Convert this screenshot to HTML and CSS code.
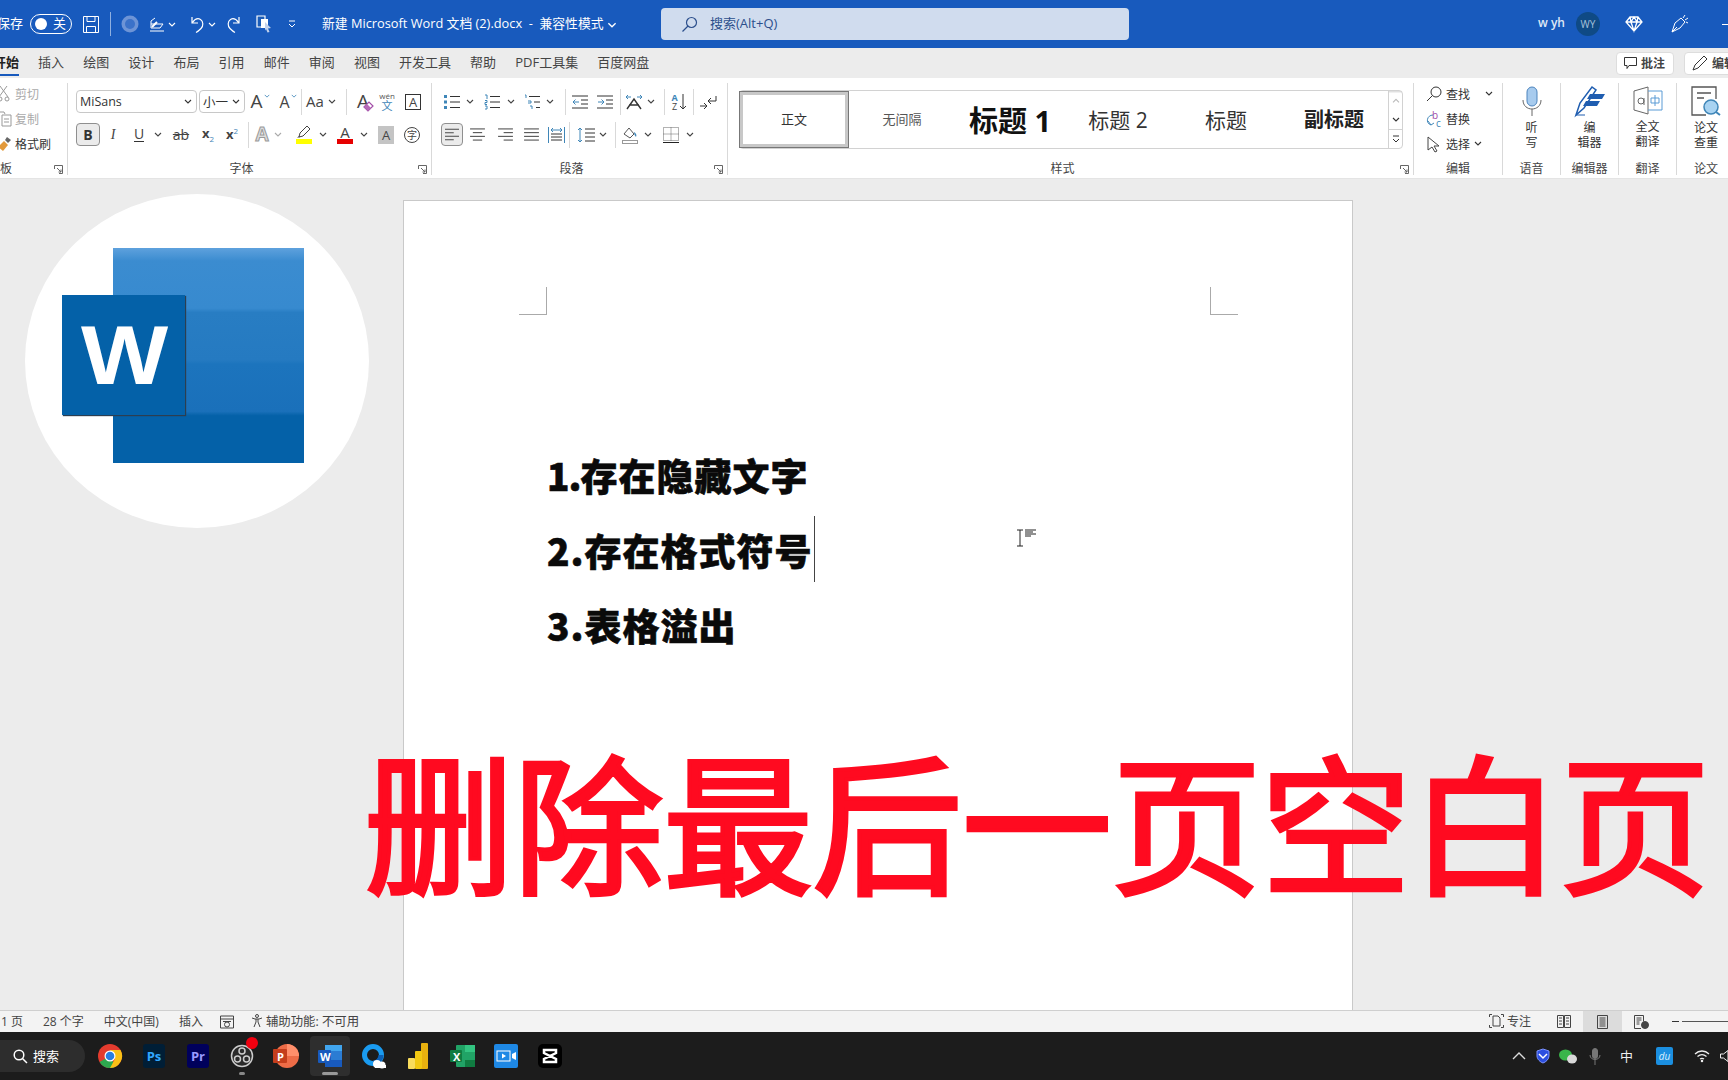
FILE: index.html
```html
<!DOCTYPE html>
<html lang="zh-CN">
<head>
    <meta charset="UTF-8">
    <title>新建 Microsoft Word 文档 (2).docx - Word</title>
    <link rel="stylesheet" href="styles.css">
</head>
<body>
    <svg class="sprite" width="0" height="0">
        <symbol id="chev" viewBox="0 0 8 5"><path d="M1 1l3 3 3-3" fill="none" stroke="currentColor" stroke-width="1.1"/></symbol>
        <symbol id="launcher" viewBox="0 0 9 9"><path d="M.5 4V.5h8v8H5M3 3l4 4M7 4.500V7H4.500" fill="none" stroke="#666"/></symbol>
        <symbol id="lines" viewBox="0 0 16 14"><path d="M0 1h16M0 5h16M0 9h16M0 13h16" stroke="currentColor" fill="none"/></symbol>
        <symbol id="left" viewBox="0 0 16 14"><path d="M0 1h16M0 5h10M0 9h16M0 13h10" stroke="#333" fill="none"/></symbol>
        <symbol id="center" viewBox="0 0 16 14"><path d="M0 1h16M3 5h10M0 9h16M3 13h10" stroke="#333" fill="none"/></symbol>
        <symbol id="right" viewBox="0 0 16 14"><path d="M0 1h16M6 5h10M0 9h16M6 13h10" stroke="#333" fill="none"/></symbol>
    </svg>

    <header class="titlebar">
        <span class="save-label">保存</span>
        <span class="w7"></span>
        <span class="toggle"><i class="knob"></i><span class="toggle-text">关</span></span>
        <span class="tool w38">
            <svg width="16" height="17" viewBox="0 0 16 17" fill="none" stroke="#fff"><path d="M.5.500h15v16H.5zM4 .5v5h8v-5M3.500 16.500v-6h9v6"/></svg>
        </span>
        <i class="bar"></i>
        <span class="tool w38">
            <svg width="18" height="18" viewBox="0 0 18 18"><circle cx="9" cy="9" r="8.500" fill="#6d94d6"/><circle cx="9" cy="9" r="5" fill="#3b72c9"/></svg>
        </span>
        <span class="tool w16">
            <svg width="16" height="15" viewBox="0 0 16 15" fill="none" stroke="#fff"><path d="M1 14h14M2 11V4l4-3M2 7h12l-3 4H2"/><path d="M3 10l5-5" stroke-width="2"/></svg>
        </span>
        <span class="tool w14 on-blue"><svg width="8" height="5"><use href="#chev"/></svg></span>
        <span class="w4"></span>
        <span class="tool w26">
            <svg width="16" height="17" viewBox="0 0 16 17" fill="none" stroke="#fff" stroke-width="1.200"><path d="M4 1v6h6M4.500 6.500C7 3 10 2 12.500 3.500c3 2 3 6.500 .5 9-1.500 1.500-3 3-5 4"/></svg>
        </span>
        <span class="tool w6 on-blue"><svg width="8" height="5"><use href="#chev"/></svg></span>
        <span class="tool w40">
            <svg width="16" height="17" viewBox="0 0 16 17" fill="none" stroke="#fff" stroke-width="1.200"><path d="M12 1v6H6M11.500 6.500C9 3 6 2 3.500 3.500c-3 2-3 6.500-.5 9 1.500 1.500 3 3 5 4"/></svg>
        </span>
        <span class="tool w18">
            <svg width="17" height="18" viewBox="0 0 17 18"><path d="M1 1h8v11H1z" fill="#1a5cb8" stroke="#fff" stroke-width="1.200"/><path d="M5 4h7v9H5z" fill="#fff"/><path d="M9 7l6 6-3 .5 1.500 3.500-2 .5-1.500-3.500-1 1.500z" fill="#c4d3ec"/></svg>
        </span>
        <span class="tool w38">
            <svg width="8" height="9" viewBox="0 0 8 9" fill="none" stroke="#fff"><path d="M1 1h6M1 4l3 3 3-3"/></svg>
        </span>
        <span class="w11"></span>
        <span class="doc-title">新建 Microsoft Word 文档 (2).docx &nbsp;-&nbsp; 兼容性模式 <svg width="10" height="6"><use href="#chev"/></svg></span>
        <div class="search">
            <svg width="17" height="17" viewBox="0 0 17 17" fill="none" stroke="#2c4f8c" stroke-width="1.200"><circle cx="10.500" cy="6.500" r="5"/><path d="M7 10l-5.500 5.500"/></svg>
            <span class="search-text">搜索(Alt+Q)</span>
        </div>
        <div class="account">
            <span class="user-name">w yh</span>
            <span class="avatar">WY</span>
            <span class="tool w68">
                <svg width="18" height="16" viewBox="0 0 18 16" fill="none" stroke="#fff" stroke-width="1.300"><path d="M5 1h8l4 5-8 9-8-9zM1 6h16M6 6l3 9 3-9M5 1l1 5 3-5 3 5 1-5"/></svg>
            </span>
            <span class="tool w24">
                <svg width="18" height="20" viewBox="0 0 18 20" fill="none" stroke="#fff"><path d="M1 18l3-9 6-5 4 4-5 6zM1 18l5-5M12 4l2-3M14 6l3-2M15 8l2 1"/></svg>
            </span>
            <i class="minimize"></i>
        </div>
    </header>

    <nav class="tabs">
        <span class="tab active">开始</span>
        <span class="tab">插入</span>
        <span class="tab">绘图</span>
        <span class="tab">设计</span>
        <span class="tab">布局</span>
        <span class="tab">引用</span>
        <span class="tab">邮件</span>
        <span class="tab">审阅</span>
        <span class="tab">视图</span>
        <span class="tab">开发工具</span>
        <span class="tab">帮助</span>
        <span class="tab">PDF工具集</span>
        <span class="tab">百度网盘</span>
        <div class="tab-actions">
            <span class="pill pill-comment">
                <svg width="13" height="12" viewBox="0 0 13 12" fill="none" stroke="#333"><path d="M.5.500h12v8H5l-2 3v-3H.5z"/></svg>
                批注
            </span>
            <span class="pill pill-edit">
                <svg width="16" height="16" viewBox="0 0 16 16" fill="none" stroke="#333"><path d="M1 15l2-5L12 1l3 3-9 9z"/></svg>
                编辑
            </span>
        </div>
    </nav>

    <section class="ribbon">
        <div class="group g-clip">
            <div class="group-body clip-list">
                <div class="clip-row muted">
                    <svg width="14" height="16" viewBox="0 0 14 16" fill="none" stroke="#999"><path d="M2 0l8 11M9 0L1 11"/><circle cx="2" cy="13" r="2"/><circle cx="9" cy="13" r="2"/></svg>
                    剪切
                </div>
                <div class="clip-row muted">
                    <svg width="14" height="16" viewBox="0 0 14 16" fill="none" stroke="#999"><path d="M1 1h5l1 2M4 4h9v11H4zM6 8h5M6 11h5"/></svg>
                    复制
                </div>
                <div class="clip-row">
                    <svg width="14" height="16" viewBox="0 0 14 16"><path d="M9 1l4 3-3 3-3-3z" fill="#666"/><path d="M6 5l4 4-5 6-5-4z" fill="#e39a3b"/></svg>
                    格式刷
                </div>
            </div>
            <div class="group-label clip-label">板<svg class="launcher" width="9" height="9"><use href="#launcher"/></svg></div>
        </div>

        <div class="group g-font">
            <div class="group-body">
                <div class="row">
                    <span class="w8"></span>
                    <span class="select w121">MiSans<svg width="8" height="5"><use href="#chev"/></svg></span>
                    <span class="w2"></span>
                    <span class="select w46">小一<svg width="8" height="5"><use href="#chev"/></svg></span>
                    <span class="tool w30"><span class="glyph g20">A</span><svg class="tick" width="6" height="4"><use href="#chev"/></svg></span>
                    <span class="tool w26"><span class="glyph g16">A</span><svg class="tick" width="6" height="4"><use href="#chev"/></svg></span>
                    <i class="sep"></i>
                    <span class="tool w26"><span class="glyph g15">Aa</span></span>
                    <span class="tool w8"><svg width="8" height="5"><use href="#chev"/></svg></span>
                    <span class="w10"></span>
                    <i class="sep"></i>
                    <span class="tool w32">
                        <span class="glyph g20">A</span>
                        <svg class="eraser" width="11" height="11" viewBox="0 0 11 11"><path d="M1 6l5-5 4 4-5 5z" fill="#fff" stroke="#a24ea8" stroke-width="1.200"/><path d="M1 6l3-3 4 4-3 3z" fill="#b56ab8"/></svg>
                    </span>
                    <span class="tool w16 wen"><span class="wen-top">wén</span><span class="wen-main">文</span></span>
                    <span class="tool w36"><span class="boxed-a">A</span></span>
                </div>
                <div class="row row-2">
                    <span class="w8"></span>
                    <span class="pressed w24"><b class="bold-b">B</b></span>
                    <span class="tool w26"><span class="glyph g14 italic">I</span></span>
                    <span class="tool w26"><span class="glyph g14 under">U</span></span>
                    <span class="tool w12"><svg width="8" height="5"><use href="#chev"/></svg></span>
                    <span class="tool w34"><span class="glyph g14 strike">ab</span></span>
                    <span class="tool w20"><span class="glyph g13 bold">x<sub class="blue-sub">2</sub></span></span>
                    <span class="tool w28"><span class="glyph g13 bold">x<sup class="blue-sub">2</sup></span></span>
                    <span class="w2"></span>
                    <i class="sep"></i>
                    <span class="tool w26"><span class="glyph g20 outline-a">A</span></span>
                    <span class="tool w6 light"><svg width="8" height="5"><use href="#chev"/></svg></span>
                    <span class="w7"></span>
                    <span class="tool w32">
                        <svg width="16" height="19" viewBox="0 0 16 19"><path d="M3 12l1-4 7-7 3 3-7 7z" fill="#fff" stroke="#444"/><path d="M1 13l3-1-1-1z" fill="#444"/><rect y="14" width="16" height="5" fill="#ffff00"/></svg>
                    </span>
                    <span class="tool w6"><svg width="8" height="5"><use href="#chev"/></svg></span>
                    <span class="w3"></span>
                    <span class="tool w32 color-a"><span class="glyph g15">A</span><i class="color-red"></i></span>
                    <span class="tool w6"><svg width="8" height="5"><use href="#chev"/></svg></span>
                    <span class="tool w38"><span class="gray-a">A</span></span>
                    <span class="tool w14"><span class="ring-char">字</span></span>
                </div>
            </div>
            <div class="group-label with-launcher">字体<svg class="launcher" width="9" height="9"><use href="#launcher"/></svg></div>
        </div>

        <div class="group g-para">
            <div class="group-body">
                <div class="row">
                    <span class="w8"></span>
                    <span class="tool w24">
                        <svg width="16" height="14" viewBox="0 0 16 14"><path d="M0 0h3v3H0zM0 5.500h3v3H0zM0 11h3v3H0z" fill="#3f86b8"/><path d="M6 1.500h10M6 7h10M6 12.500h10" stroke="#333"/></svg>
                    </span>
                    <span class="tool w12"><svg width="8" height="5"><use href="#chev"/></svg></span>
                    <span class="tool w32">
                        <svg width="16" height="14" viewBox="0 0 16 14"><path d="M1 0h2v4M1 5.500h2v2H1v2h2M1 11h2v3H1" fill="none" stroke="#3f86b8"/><path d="M6 1.500h10M6 7h10M6 12.500h10" stroke="#333"/></svg>
                    </span>
                    <span class="tool w6"><svg width="8" height="5"><use href="#chev"/></svg></span>
                    <span class="w4"></span>
                    <span class="tool w28">
                        <svg width="16" height="14" viewBox="0 0 16 14"><path d="M1 0h1v3M4 6h3v2H4M6 11h2v3" fill="none" stroke="#3f86b8"/><path d="M5 1.500h11M10 7h6M12 12.500h4" stroke="#333"/></svg>
                    </span>
                    <span class="tool w8"><svg width="8" height="5"><use href="#chev"/></svg></span>
                    <span class="w11"></span>
                    <i class="sep"></i>
                    <span class="tool w28">
                        <svg width="16" height="14" viewBox="0 0 16 14" fill="none"><path d="M0 1h16M9 5h7M9 9h7M0 13h16" stroke="#333"/><path d="M7 7H1M3.500 4.500L1 7l2.500 2.500" stroke="#3f86b8"/></svg>
                    </span>
                    <span class="tool w22">
                        <svg width="16" height="14" viewBox="0 0 16 14" fill="none"><path d="M0 1h16M9 5h7M9 9h7M0 13h16" stroke="#333"/><path d="M1 7h6M4.500 4.500L7 7 4.500 9.500" stroke="#3f86b8"/></svg>
                    </span>
                    <span class="w4"></span>
                    <i class="sep"></i>
                    <span class="tool w26">
                        <svg width="18" height="16" viewBox="0 0 18 16" fill="none"><path d="M2 15L9 5l7 10M4 11h10" stroke="#333" stroke-width="1.400"/><path d="M1 3h5M3 1L1 3l2 2M12 3h5M15 1l2 2-2 2" stroke="#3f86b8"/></svg>
                    </span>
                    <span class="tool w8"><svg width="8" height="5"><use href="#chev"/></svg></span>
                    <span class="w9"></span>
                    <i class="sep"></i>
                    <span class="tool w28 az">
                        <span class="az-text"><b>A</b><br>Z</span>
                        <svg width="8" height="16" viewBox="0 0 8 16" fill="none" stroke="#333"><path d="M4 0v15M1 12l3 3 3-3"/></svg>
                    </span>
                    <i class="sep"></i>
                    <span class="tool w28">
                        <svg width="18" height="14" viewBox="0 0 18 14" fill="none" stroke="#333"><path d="M17 1v5H9M12 3L9 6l3 3M1 11h7M5 8l3 3-3 3"/></svg>
                    </span>
                </div>
                <div class="row row-2">
                    <span class="w9"></span>
                    <span class="pressed w22"><svg width="14" height="13"><use href="#left"/></svg></span>
                    <span class="tool w28"><svg width="15" height="13"><use href="#center"/></svg></span>
                    <span class="tool w28"><svg width="15" height="13"><use href="#right"/></svg></span>
                    <span class="tool w24"><svg width="15" height="13" class="ink"><use href="#lines"/></svg></span>
                    <span class="tool w26">
                        <svg width="17" height="16" viewBox="0 0 17 16" fill="none"><path d="M.5 0v16M16.500 0v16M3 3h11M5 1L3 3l2 2M12 1l2 2-2 2" stroke="#3f86b8"/><path d="M3 7h11M3 10h11M3 13h11" stroke="#333"/></svg>
                    </span>
                    <i class="sep"></i>
                    <span class="w2"></span>
                    <span class="tool w28">
                        <svg width="18" height="16" viewBox="0 0 18 16" fill="none"><path d="M3 1v14M1 3l2-2 2 2M1 13l2 2 2-2" stroke="#3f86b8"/><path d="M8 2h10M8 6h10M8 10h10M8 14h10" stroke="#333"/></svg>
                    </span>
                    <span class="tool w6"><svg width="8" height="5"><use href="#chev"/></svg></span>
                    <span class="w9"></span>
                    <i class="sep"></i>
                    <span class="tool w28">
                        <svg width="16" height="18" viewBox="0 0 16 18" fill="none"><path d="M2 8l5-6 5 6-4 4z" stroke="#555"/><path d="M12 6c2 1 3 3 2 5-1-1-2-3-2-5z" fill="#3f86b8"/><rect x=".5" y="14.500" width="15" height="3" stroke="#999"/></svg>
                    </span>
                    <span class="tool w8"><svg width="8" height="5"><use href="#chev"/></svg></span>
                    <span class="w4"></span>
                    <span class="tool w30">
                        <svg width="16" height="16" viewBox="0 0 16 16" fill="none"><path d="M.5.500h15v13H.5zM8 .5v13M.5 7h15" stroke="#666" stroke-dasharray="1 1"/><path d="M0 15.500h16" stroke="#222"/></svg>
                    </span>
                    <span class="tool w8"><svg width="8" height="5"><use href="#chev"/></svg></span>
                </div>
            </div>
            <div class="group-label with-launcher">段落<svg class="launcher" width="9" height="9"><use href="#launcher"/></svg></div>
        </div>

        <div class="group g-styles">
            <div class="group-body">
                <div class="gallery">
                    <span class="style-item selected s-plain">正文</span>
                    <span class="style-item s-nospace">无间隔</span>
                    <span class="style-item s-h1">标题 1</span>
                    <span class="style-item s-h2">标题 2</span>
                    <span class="style-item s-h2">标题</span>
                    <span class="style-item s-sub">副标题</span>
                    <div class="gallery-scroll">
                        <span class="faint"><svg width="8" height="5"><use href="#chev"/></svg></span>
                        <span><svg width="8" height="5"><use href="#chev"/></svg></span>
                        <span><svg width="8" height="8" viewBox="0 0 8 8" fill="none" stroke="#333"><path d="M1 1h6M1 4l3 3 3-3"/></svg></span>
                    </div>
                </div>
            </div>
            <div class="group-label with-launcher">样式<svg class="launcher" width="9" height="9"><use href="#launcher"/></svg></div>
        </div>

        <div class="group g-edit">
            <div class="group-body edit-list">
                <div class="edit-row">
                    <svg width="16" height="16" viewBox="0 0 16 16" fill="none" stroke="#333"><circle cx="10" cy="6" r="5"/><path d="M6.500 9.500L1 15"/></svg>
                    查找
                    <svg class="edit-chev" width="8" height="5"><use href="#chev"/></svg>
                </div>
                <div class="edit-row">
                    <span class="replace-icon">
                        <svg width="8" height="12" viewBox="0 0 8 12" fill="none" stroke="#3f86b8"><path d="M7 1C1 1-1 9 5 11M2 7l3 4 3-2"/></svg>
                        <b>b</b><i>c</i>
                    </span>
                    替换
                </div>
                <div class="edit-row">
                    <svg width="16" height="16" viewBox="0 0 16 16" fill="#fff" stroke="#444"><path d="M2 1l11 9H8l3 5-2 1-3-5-4 3z"/></svg>
                    选择
                    <svg width="8" height="5"><use href="#chev"/></svg>
                </div>
            </div>
            <div class="group-label">编辑</div>
        </div>

        <div class="group g-big">
            <div class="big-btn">
                <svg width="20" height="30" viewBox="0 0 20 30"><rect x="5" y="1" width="10" height="19" rx="5" fill="#a7cbee" stroke="#4d84bd"/><path d="M1 14c0 12 18 12 18 0M10 23v7" fill="none" stroke="#666"/></svg>
                <span class="big-text">听<br>写</span>
            </div>
            <div class="group-label">语音</div>
        </div>
        <div class="group g-big">
            <div class="big-btn">
                <svg width="32" height="30" viewBox="0 0 32 30"><path d="M2 29l4-12L18 1l4 3L10 22z" fill="#fff" stroke="#1f5db0" stroke-width="1.500"/><path d="M16 8h15l-3 5H13zM12 15h14l-3 5H9z" fill="#1f5db0"/><path d="M2 29h9" stroke="#1f5db0"/></svg>
                <span class="big-text">编<br>辑器</span>
            </div>
            <div class="group-label">编辑器</div>
        </div>
        <div class="group g-big">
            <div class="big-btn">
                <svg width="30" height="29" viewBox="0 0 30 29" fill="none"><path d="M1 5l14-4v27L1 24z" stroke="#666"/><path d="M15 5h14v19H15" stroke="#5b9bd5"/><path d="M22 9v11M18 12h8v5h-8z" stroke="#5b9bd5"/><circle cx="8" cy="15" r="3" stroke="#666"/><path d="M11 12v7" stroke="#666"/></svg>
                <span class="big-text">全文<br>翻译</span>
            </div>
            <div class="group-label">翻译</div>
        </div>
        <div class="group g-big last">
            <div class="big-btn">
                <svg width="30" height="30" viewBox="0 0 30 30" fill="none"><path d="M25 13V1H1v28h14" stroke="#555" stroke-width="1.300"/><path d="M6 7h14M6 12h7" stroke="#555" stroke-width="1.300"/><circle cx="20" cy="21" r="7" fill="#a8d3f2" stroke="#3f86b8" stroke-width="1.500"/><path d="M25 26l4 3" stroke="#3f86b8" stroke-width="2"/></svg>
                <span class="big-text">论文<br>查重</span>
            </div>
            <div class="group-label">论文</div>
        </div>
    </section>

    <main class="workspace">
        <article class="page">
            <i class="crop crop-left"></i>
            <i class="crop crop-right"></i>
            <p class="doc-line"><span class="num">1.</span>存在隐藏文字</p>
            <p class="doc-line">2.存在格式符号<i class="caret"></i></p>
            <p class="doc-line">3.表格溢出</p>
            <svg class="ibeam" width="20" height="20" viewBox="0 0 20 20" fill="none"><path d="M1 1h6M4 1v16M1 17h6" stroke="#222"/><path d="M9 1h11M9 3h8M9 5h11M9 7h6" stroke="#222"/></svg>
        </article>

        <div class="logo-disc">
            <div class="logo-back"></div>
            <div class="logo-front"><span class="logo-w">W</span></div>
        </div>

        <div class="headline">删除最后一页空白页</div>
    </main>

    <footer class="statusbar">
        <span class="status-first">1 页</span>
        <span>28 个字</span>
        <span>中文(中国)</span>
        <span>插入</span>
        <svg class="status-macro" width="14" height="14" viewBox="0 0 14 14" fill="none" stroke="#444"><path d="M.5 1h13v12H.5zM.5 4h13M3 6.500h8"/><circle cx="7" cy="9.500" r="2.500"/></svg>
        <span class="status-a11y">
            <svg width="14" height="14" viewBox="0 0 14 14" fill="none" stroke="#444"><circle cx="6" cy="2" r="1.500"/><path d="M1 4l3 1h4l3-1M5 5v3l-2 5M7 5v3l2 5"/></svg>
            辅助功能: 不可用
        </span>
        <div class="status-right">
            <span class="focus">
                <svg width="15" height="14" viewBox="0 0 15 14" fill="none" stroke="#444"><path d="M3 .5H.5V3M12 .5h2.500V3M3 13.500H.5V11M12 13.500h2.500V11M4 2h5l2 2v8H4z"/></svg>
                专注
            </span>
            <span class="view w39">
                <svg width="14" height="13" viewBox="0 0 14 13" fill="none" stroke="#444"><path d="M.5.500h6v12h-6zM7.500.5h6v12h-6zM2 3h3M2 6h3M2 9h3M9 3h3M9 6h3M9 9h3"/></svg>
            </span>
            <span class="view w39 view-on">
                <svg width="11" height="14" viewBox="0 0 11 14" fill="none" stroke="#444"><path d="M.5.500h10v13H.5zM2.500 3h6M2.500 5h6M2.500 7h6M2.500 9h6M2.500 11h6"/></svg>
            </span>
            <span class="view w39">
                <svg width="15" height="14" viewBox="0 0 15 14" fill="none" stroke="#444"><path d="M7 13.500H.5V.5h9v6M2.500 3h5M2.500 5h5M2.500 7h3M2.500 9h3"/><circle cx="11" cy="10" r="3.500" fill="#444"/></svg>
            </span>
            <i class="zoom-minus"></i>
            <i class="zoom-track"></i>
        </div>
    </footer>

    <footer class="taskbar">
        <div class="task-search">
            <svg width="15" height="15" viewBox="0 0 15 15" fill="none" stroke="#fff" stroke-width="1.500"><circle cx="6" cy="6" r="4.800"/><path d="M9.500 9.500L14 14"/></svg>
            <span class="task-search-text">搜索</span>
        </div>
        <div class="task-icons">
            <span class="task-icon">
                <svg width="24" height="24" viewBox="0 0 24 24"><circle cx="12" cy="12" r="12" fill="#e33b2e"/><path d="M12 12L1.600 18A12 12 0 0 0 12 24c2 0 4-.5 5.500-1.500z" fill="#2da94f"/><path d="M12 6h10.500A12 12 0 0 1 12 24l5-9z" fill="#fbc116"/><circle cx="12" cy="12" r="5.500" fill="#fff"/><circle cx="12" cy="12" r="4.300" fill="#2a7de1"/></svg>
            </span>
            <span class="task-icon"><span class="app-tile tile-ps">Ps</span></span>
            <span class="task-icon"><span class="app-tile tile-pr">Pr</span></span>
            <span class="task-icon dot">
                <svg width="24" height="24" viewBox="0 0 24 24" fill="none" stroke="#ccc" stroke-width="1.500"><circle cx="12" cy="12" r="10.500" fill="#2a2a2a"/><circle cx="12" cy="7" r="3"/><circle cx="7.500" cy="15" r="3"/><circle cx="16.500" cy="15" r="3"/></svg>
                <i class="red-badge"></i>
            </span>
            <span class="task-icon">
                <svg width="26" height="24" viewBox="0 0 26 24"><circle cx="14" cy="12" r="12" fill="#ed6c47"/><path d="M14 0a12 12 0 0 1 12 12H14z" fill="#ff8f6b"/><rect y="5" width="14" height="14" rx="1" fill="#c43e1c"/></svg>
                <span class="ppt-p">P</span>
            </span>
            <span class="task-icon task-active">
                <svg width="24" height="24" viewBox="0 0 24 24"><rect x="7" y="1" width="17" height="22" rx="1" fill="#2b7cd3"/><rect x="7" y="1" width="17" height="6" fill="#41a5ee"/><rect x="7" y="16" width="17" height="7" fill="#185abd"/><rect y="6" width="13" height="13" rx="1" fill="#185abd"/></svg>
                <span class="word-w">W</span>
                <i class="active-bar"></i>
            </span>
            <span class="task-icon">
                <svg width="24" height="26" viewBox="0 0 24 26"><circle cx="11" cy="12" r="8.500" fill="none" stroke="#1a9bf0" stroke-width="5"/><path d="M11 20a8 8 0 0 0 8-8" stroke="#0b5fb5" stroke-width="5" fill="none"/><circle cx="15" cy="21" r="4" fill="#fff"/><circle cx="20" cy="22" r="3.500" fill="#fff"/><rect x="13" y="22" width="11" height="3" fill="#fff"/></svg>
            </span>
            <span class="task-icon">
                <svg width="20" height="26" viewBox="0 0 20 26"><rect x="13" y="0" width="7" height="26" rx="1" fill="#e8b10f"/><rect x="7" y="8" width="7" height="18" rx="1" fill="#f2c811"/><rect y="15" width="7" height="11" rx="1" fill="#f9dc5c"/></svg>
            </span>
            <span class="task-icon">
                <svg width="25" height="24" viewBox="0 0 25 24"><rect x="6" y="1" width="19" height="22" rx="1" fill="#21a366"/><rect x="15" y="1" width="10" height="7" fill="#33c481"/><rect x="15" y="16" width="10" height="7" fill="#107c41"/><rect y="6" width="12" height="12" rx="1" fill="#107c41"/></svg>
                <span class="excel-x">X</span>
            </span>
            <span class="task-icon">
                <svg width="24" height="24" viewBox="0 0 24 24"><rect width="24" height="24" rx="2" fill="#1e88e5"/><rect x="3" y="7" width="13" height="10" fill="none" stroke="#fff"/><path d="M8 9.500v5l4-2.500zM18 10l4-2v8l-4-2z" fill="#fff"/></svg>
            </span>
            <span class="task-icon">
                <svg width="24" height="24" viewBox="0 0 24 24"><rect width="24" height="24" rx="5" fill="#000"/><path d="M6 6h12v3L6 15v3h12v-3L6 9z" fill="none" stroke="#fff" stroke-width="2.500"/></svg>
            </span>
        </div>
        <div class="tray">
            <svg class="tray-up" width="14" height="8" viewBox="0 0 14 8" fill="none" stroke="#ddd" stroke-width="1.400"><path d="M1 7l6-6 6 6"/></svg>
            <svg class="tray-shield" width="16" height="16" viewBox="0 0 16 16"><path d="M8 1l6 2v5c0 3-3 6-6 7-3-1-6-4-6-7V3z" fill="#2c4fe0" stroke="#7d93ff"/><path d="M4 6l4 4 4-4" fill="none" stroke="#fff" stroke-width="1.500"/></svg>
            <svg class="tray-chat" width="18" height="15" viewBox="0 0 18 15"><ellipse cx="6.500" cy="6" rx="6.500" ry="5.500" fill="#39b54a"/><ellipse cx="13" cy="10" rx="5" ry="4.500" fill="#d9d9d9"/></svg>
            <svg class="tray-mic" width="12" height="17" viewBox="0 0 12 17" fill="none" stroke="#777"><rect x="3.500" y=".5" width="5" height="10" rx="2.500" fill="#777"/><path d="M1 7c0 6 10 6 10 0M6 12v5"/></svg>
            <span class="tray-ime">中</span>
            <span class="tray-du">du</span>
            <svg class="tray-wifi" width="16" height="12" viewBox="0 0 16 12" fill="none" stroke="#eee" stroke-width="1.300"><path d="M1 4c4-4 10-4 14 0M3.500 6.500c3-2.500 6-2.500 9 0M6 9c1.500-1 2.500-1 4 0"/><circle cx="8" cy="11" r=".6"/></svg>
            <svg class="tray-sound" width="8" height="12" viewBox="0 0 8 12" fill="none" stroke="#eee"><path d="M.5 4h3L8 .5v11L3.500 8h-3z"/></svg>
        </div>
    </footer>
</body>
</html>
```

FILE: styles.css
```css
* {
    margin: 0;
    padding: 0;
    box-sizing: border-box;
}

html, body {
    height: 100%;
}

body {
    width: 1728px;
    height: 1080px;
    overflow: hidden;
    display: flex;
    flex-direction: column;
    font-family: "Open Sans", "Noto Sans CJK SC", sans-serif;
    font-size: 12px;
    color: #333;
    background: #ececec;
}

.sprite {
    position: absolute;
}

svg {
    flex-shrink: 0;
    overflow: visible;
}

i {
    font-style: normal;
}

/* spacing helpers for the toolbar rows */
.w2 { width: 2px; flex: none; }
.w3 { width: 3px; flex: none; }
.w4 { width: 4px; flex: none; }
.w6 { width: 6px; flex: none; }
.w7 { width: 7px; flex: none; }
.w8 { width: 8px; flex: none; }
.w9 { width: 9px; flex: none; }
.w10 { width: 10px; flex: none; }
.w11 { width: 11px; flex: none; }
.w12 { width: 12px; flex: none; }
.w14 { width: 14px; flex: none; }
.w16 { width: 16px; flex: none; }
.w18 { width: 18px; flex: none; }
.w20 { width: 20px; flex: none; }
.w22 { width: 22px; flex: none; }
.w24 { width: 24px; flex: none; }
.w26 { width: 26px; flex: none; }
.w28 { width: 28px; flex: none; }
.w30 { width: 30px; flex: none; }
.w32 { width: 32px; flex: none; }
.w34 { width: 34px; flex: none; }
.w36 { width: 36px; flex: none; }
.w38 { width: 38px; flex: none; }
.w39 { width: 39px; flex: none; }
.w40 { width: 40px; flex: none; }
.w46 { width: 46px; flex: none; }
.w68 { width: 68px; flex: none; }
.w121 { width: 121px; flex: none; }

.tool {
    display: flex;
    align-items: center;
    justify-content: center;
    position: relative;
    height: 23px;
    color: #444;
}

/* title bar */
.titlebar {
    height: 48px;
    flex: none;
    display: flex;
    align-items: center;
    background: #185abd;
    color: #fff;
    font-size: 13px;
}

.titlebar .tool {
    color: #fff;
}

.save-label {
    width: 26px;
    margin-left: -3px;
    padding-bottom: 4px;
}

.toggle {
    width: 42px;
    height: 20px;
    flex: none;
    display: flex;
    align-items: center;
    justify-content: flex-end;
    padding-right: 5px;
    border: 1px solid #fff;
    border-radius: 10px;
    position: relative;
}

.toggle-text {
    padding-bottom: 3px;
}

.knob {
    position: absolute;
    left: 4px;
    top: 3px;
    width: 12px;
    height: 12px;
    background: #fff;
    border-radius: 50%;
}

.bar {
    width: 1px;
    height: 24px;
    flex: none;
    background: #8fb0e0;
}

.doc-title {
    width: 339px;
    flex: none;
    padding-bottom: 4px;
    white-space: nowrap;
    font-size: 12.800px;
}

.search {
    width: 468px;
    height: 32px;
    flex: none;
    display: flex;
    align-items: center;
    gap: 12px;
    padding-left: 20px;
    background: #d0dcee;
    border-radius: 4px;
    color: #2c4f8c;
}

.search-text {
    padding-bottom: 4px;
}

.account {
    margin-left: auto;
    display: flex;
    align-items: center;
}

.user-name {
    padding-bottom: 3px;
    font-weight: 600;
    font-size: 12px;
    color: #dfe8f5;
}

.avatar {
    width: 24px;
    height: 24px;
    margin-left: 11px;
    display: flex;
    align-items: center;
    justify-content: center;
    border-radius: 50%;
    background: #0f4a85;
    color: #a9c3dc;
    font-size: 10px;
}

.minimize {
    width: 6px;
    height: 1px;
    margin-left: 30px;
    background: #fff;
}

/* tab row */
.tabs {
    height: 30px;
    flex: none;
    display: flex;
    align-items: center;
    gap: 19.100px;
    background: #ececec;
    font-size: 13px;
    color: #444;
    position: relative;
}

.tab {
    line-height: 18px;
    padding-bottom: 3px;
    white-space: nowrap;
}

.tab.active {
    margin-left: -7px;
    font-weight: 700;
    color: #222;
    position: relative;
}

.tab.active::after {
    content: "";
    position: absolute;
    left: 0;
    right: 0;
    bottom: -2px;
    height: 2px;
    background: #185abd;
}

.tab-actions {
    margin-left: auto;
    display: flex;
    gap: 10px;
    margin-right: -29px;
}

.pill {
    height: 23px;
    display: flex;
    align-items: center;
    gap: 4px;
    padding: 0 7px;
    background: #fff;
    border: 1px solid #ddd;
    border-radius: 4px;
    font-weight: 700;
    font-size: 12px;
    white-space: nowrap;
}

.pill-comment {
    width: 58px;
}

.pill-edit {
    width: 73px;
}

/* ribbon */
.ribbon {
    height: 101px;
    flex: none;
    display: flex;
    align-items: flex-start;
    padding-top: 5px;
    background: #fff;
    border-bottom: 1px solid #e4e4e4;
}

.group {
    flex: none;
    height: 92px;
    display: flex;
    flex-direction: column;
    border-right: 1px solid #d9d9d9;
    position: relative;
}

.group-body {
    height: 76px;
    padding-top: 7px;
}

.group-label {
    height: 14px;
    margin-top: 2px;
    line-height: 16px;
    text-align: center;
    font-size: 12px;
    color: #444;
}

.with-launcher {
    padding-right: 16px;
}

.launcher {
    position: absolute;
    right: 4px;
    bottom: 1px;
}

.g-clip { width: 68px; }
.g-font { width: 364px; }
.g-para { width: 296px; }
.g-styles { width: 686px; }
.g-edit { width: 89px; }
.g-big { width: 58px; }
.g-big.last { border-right: none; }

.clip-list {
    padding-top: 0;
    margin-top: -2px;
    margin-bottom: 2px;
}

.clip-row {
    height: 25px;
    display: flex;
    align-items: center;
    gap: 3px;
    margin-left: -2px;
    white-space: nowrap;
}

.clip-row.muted {
    color: #aaa;
}

.clip-label {
    text-align: left;
}

.row {
    display: flex;
    align-items: center;
    height: 23px;
}

.row-2 {
    margin-top: 10px;
}

.sep {
    width: 1px;
    height: 26px;
    flex: none;
    background: #d9d9d9;
}

.select {
    height: 23px;
    display: flex;
    align-items: center;
    justify-content: space-between;
    padding: 0 4px 0 3px;
    border: 1px solid #c8c8c8;
    border-radius: 4px;
    font-size: 12.500px;
    color: #333;
}

.pressed {
    height: 23px;
    display: flex;
    align-items: center;
    justify-content: center;
    background: #ebebeb;
    border: 1px solid #8f8f8f;
    border-radius: 4px;
}

.glyph {
    font-family: "Open Sans", sans-serif;
    color: #444;
    line-height: 1;
}

.g13 { font-size: 13px; }
.g14 { font-size: 14px; }
.g15 { font-size: 15px; }
.g16 { font-size: 16px; }
.g20 { font-size: 19px; }

.bold { font-weight: 700; }
.italic { font-style: italic; font-family: "Liberation Serif", serif; }
.bold-b { font-size: 14px; color: #333; }

.under {
    border-bottom: 1px solid #333;
}

.strike {
    text-decoration: line-through;
}

.blue-sub {
    font-size: 8px;
    color: #3f86b8;
    font-weight: 400;
}

.tick {
    margin: -12px 0 0 1px;
    color: #3f86b8;
}

.eraser {
    position: absolute;
    right: 5px;
    bottom: 1px;
}

.wen {
    flex-direction: column;
}

.wen-top {
    font-size: 8px;
    line-height: 9px;
    color: #555;
}

.wen-main {
    font-size: 11px;
    line-height: 12px;
    color: #3f86b8;
}

.boxed-a {
    width: 16px;
    height: 16px;
    display: flex;
    align-items: center;
    justify-content: center;
    border: 1px solid #333;
    font-size: 13px;
    color: #444;
}

.outline-a {
    color: #ddd;
    font-weight: 700;
    -webkit-text-stroke: 1px #9a9a9a;
}

.light {
    color: #aaa;
}

.color-a {
    flex-direction: column;
}

.color-red {
    width: 16px;
    height: 5px;
    background: #e60000;
    margin-top: -1px;
}

.gray-a {
    width: 16px;
    height: 18px;
    display: flex;
    align-items: center;
    justify-content: center;
    background: #c4c4c4;
    font-size: 13px;
}

.ring-char {
    width: 16px;
    height: 16px;
    flex: none;
    display: flex;
    align-items: center;
    justify-content: center;
    border: 1px solid #444;
    border-radius: 50%;
    font-size: 10px;
}

.ink {
    color: #333;
}

.az {
    gap: 1px;
}

.az-text {
    font-size: 9px;
    line-height: 9px;
    text-align: center;
}

.az-text b {
    color: #3f86b8;
}

/* style gallery */
.gallery {
    width: 664px;
    height: 59px;
    margin-left: 11px;
    display: flex;
    align-items: center;
    border: 1px solid #d2d2d2;
    border-radius: 4px;
}

.style-item {
    width: 108px;
    height: 55px;
    flex: none;
    display: flex;
    align-items: center;
    justify-content: center;
    padding-bottom: 2px;
    color: #333;
    white-space: nowrap;
}

.selected {
    border: 3px solid #c8c8c8;
    outline: 1px solid #777;
}

.s-plain { font-size: 13px; }
.s-nospace { font-size: 13px; color: #555; }
.s-h1 { font-size: 29px; font-weight: 700; color: #111; }
.s-h2 { font-size: 21px; }
.s-sub { font-size: 20px; font-weight: 700; color: #222; }

.gallery-scroll {
    width: 15px;
    height: 57px;
    margin-left: auto;
    display: flex;
    flex-direction: column;
    border-left: 1px solid #d2d2d2;
}

.gallery-scroll span {
    flex: 1;
    display: flex;
    align-items: center;
    justify-content: center;
    border-bottom: 1px solid #d2d2d2;
}

.gallery-scroll span:last-child {
    border-bottom: none;
}

.gallery-scroll .faint {
    color: #bbb;
    transform: scaleY(-1);
}

/* editing */
.edit-list {
    padding-top: 0;
    margin-top: -2px;
    margin-bottom: 2px;
}

.edit-row {
    height: 25px;
    display: flex;
    align-items: center;
    gap: 4px;
    padding-left: 12px;
    white-space: nowrap;
}

.edit-chev {
    margin-left: 11px;
}

.replace-icon {
    width: 16px;
    height: 16px;
    position: relative;
    font-size: 10px;
    line-height: 1;
}

.replace-icon svg {
    position: absolute;
    left: 0;
    top: 3px;
}

.replace-icon b {
    position: absolute;
    left: 6px;
    top: -1px;
    color: #a24ea8;
    font-weight: 400;
}

.replace-icon i {
    position: absolute;
    left: 10px;
    top: 7px;
    color: #3f86b8;
}

.big-btn {
    height: 76px;
    display: flex;
    flex-direction: column;
    align-items: center;
    padding-top: 3px;
}

.big-text {
    margin-top: 4px;
    line-height: 15px;
    text-align: center;
}

/* document area */
.workspace {
    flex: 1;
    min-height: 0;
    position: relative;
    overflow: hidden;
    padding-top: 21px;
    background: #ececec;
}

.page {
    width: 950px;
    height: 100%;
    margin-left: 403px;
    padding: 237px 0 0 143px;
    position: relative;
    background: #fff;
    border: 1px solid #c9c9c9;
    border-bottom: none;
}

.crop {
    position: absolute;
    top: 86px;
    width: 28px;
    height: 28px;
    border-bottom: 1px solid #aaa;
}

.crop-left {
    left: 115px;
    border-right: 1px solid #aaa;
}

.crop-right {
    left: 806px;
    border-left: 1px solid #aaa;
}

.doc-line {
    height: 75px;
    line-height: 75px;
    font-family: "Noto Sans CJK SC", sans-serif;
    font-size: 37px;
    font-weight: 900;
    letter-spacing: 1px;
    color: #0a0a0a;
    -webkit-text-stroke: 0.6px #0a0a0a;
    white-space: nowrap;
}

.num {
    letter-spacing: -1px;
}

.caret {
    display: inline-block;
    width: 1.500px;
    height: 66px;
    margin-left: 1px;
    vertical-align: -16px;
    background: #444;
}

.ibeam {
    position: absolute;
    left: 612px;
    top: 328px;
}

.logo-disc {
    position: absolute;
    left: 25px;
    top: 15px;
    width: 344px;
    height: 334px;
    background: #fff;
    border-radius: 50%;
}

.logo-back {
    position: absolute;
    left: 88px;
    top: 54px;
    width: 191px;
    height: 215px;
    background: linear-gradient(180deg, #5ea1dd 0, #3b8cd0 6%, #378acf 28%, #287dc3 30%, #257ac1 52%, #1c74bd 54%, #1a70ba 76%, #0461a8 78%, #0461a8 100%);
}

.logo-front {
    position: absolute;
    left: 37px;
    top: 101px;
    width: 123px;
    height: 120px;
    display: flex;
    align-items: center;
    justify-content: center;
    padding-left: 3px;
    background: #0461a8;
    box-shadow: 1px 1px 1px #2c3e50;
}

.logo-w {
    font-family: "Liberation Sans", sans-serif;
    font-weight: 700;
    font-size: 84px;
    line-height: 1;
    color: #fff;
    transform: scaleX(1.100);
}

.headline {
    position: absolute;
    left: 364px;
    top: 564px;
    font-family: "Noto Sans CJK SC", sans-serif;
    font-size: 150px;
    line-height: 150px;
    font-weight: 400;
    letter-spacing: -0.500px;
    color: #ff0a20;
    -webkit-text-stroke: 4px #ff0a20;
    white-space: nowrap;
}

/* status bar */
.statusbar {
    height: 22px;
    flex: none;
    display: flex;
    align-items: center;
    gap: 20px;
    background: #f3f3f3;
    border-top: 1px solid #cfcfcf;
    font-size: 12px;
    color: #444;
    white-space: nowrap;
}

.statusbar span {
    padding-bottom: 2px;
}

.status-first {
    margin-left: 1px;
}

.status-macro {
    margin-left: -3px;
}

.status-a11y {
    display: flex;
    align-items: center;
    gap: 1px;
    margin-left: -3px;
    font-size: 12.400px;
}

.status-right {
    margin-left: auto;
    display: flex;
    align-items: center;
    height: 100%;
}

.focus {
    display: flex;
    align-items: center;
    gap: 3px;
    margin-right: 13px;
}

.statusbar .view {
    height: 100%;
    padding-bottom: 0;
    display: flex;
    align-items: center;
    justify-content: center;
}

.view-on {
    background: #dcdcdc;
}

.zoom-minus {
    width: 7px;
    height: 1px;
    margin-left: 11px;
    background: #333;
}

.zoom-track {
    width: 46px;
    height: 1px;
    margin-left: 3px;
    background: #555;
}

/* taskbar */
.taskbar {
    height: 48px;
    flex: none;
    display: flex;
    align-items: center;
    background: #1c1c1c;
    color: #fff;
    position: relative;
}

.task-search {
    width: 85px;
    height: 32px;
    flex: none;
    display: flex;
    align-items: center;
    gap: 5px;
    padding-left: 13px;
    background: #2d2d2d;
    border-radius: 0 16px 16px 0;
    font-size: 13px;
}

.task-search-text {
    padding-bottom: 2px;
}

.task-icons {
    display: flex;
    align-items: center;
    gap: 4px;
    margin-left: 5px;
}

.task-icon {
    width: 40px;
    height: 40px;
    flex: none;
    display: flex;
    align-items: center;
    justify-content: center;
    position: relative;
    border-radius: 4px;
}

.task-active {
    background: #2e2e2e;
}

.active-bar {
    position: absolute;
    left: 12px;
    bottom: 1px;
    width: 16px;
    height: 3px;
    border-radius: 2px;
    background: #999;
}

.dot::after {
    content: "";
    position: absolute;
    left: 17px;
    bottom: 1px;
    width: 6px;
    height: 3px;
    border-radius: 2px;
    background: #888;
}

.red-badge {
    position: absolute;
    right: 4px;
    top: 1px;
    width: 12px;
    height: 12px;
    border-radius: 50%;
    background: #f0000f;
}

.app-tile {
    width: 22px;
    height: 24px;
    display: flex;
    align-items: center;
    justify-content: center;
    border-radius: 3px;
    font-size: 13px;
    font-weight: 700;
}

.tile-ps {
    background: #001e36;
    color: #31a8ff;
}

.tile-pr {
    background: #00005b;
    color: #9999ff;
}

.ppt-p,
.word-w,
.excel-x {
    position: absolute;
    top: 50%;
    transform: translateY(-50%);
    font-size: 11px;
    font-weight: 700;
    color: #fff;
}

.ppt-p { left: 11px; }
.word-w { left: 10px; }
.excel-x { left: 11px; }

.tray {
    position: absolute;
    right: 0;
    top: 0;
    bottom: 0;
    width: 218px;
    display: flex;
    align-items: center;
}

.tray-up { margin-left: 2px; }
.tray-shield { margin-left: 9px; }
.tray-chat { margin-left: 8px; }
.tray-mic { margin-left: 12px; }

.tray-ime {
    margin-left: 19px;
    padding-bottom: 2px;
    font-size: 13px;
    color: #eee;
}

.tray-du {
    width: 18px;
    height: 18px;
    margin-left: 23px;
    display: flex;
    align-items: center;
    justify-content: center;
    background: #1b8fe0;
    border-radius: 2px;
    font-style: italic;
    font-size: 10px;
    color: #d7f0ff;
}

.tray-wifi { margin-left: 21px; }
.tray-sound { margin-left: 10px; }
```
